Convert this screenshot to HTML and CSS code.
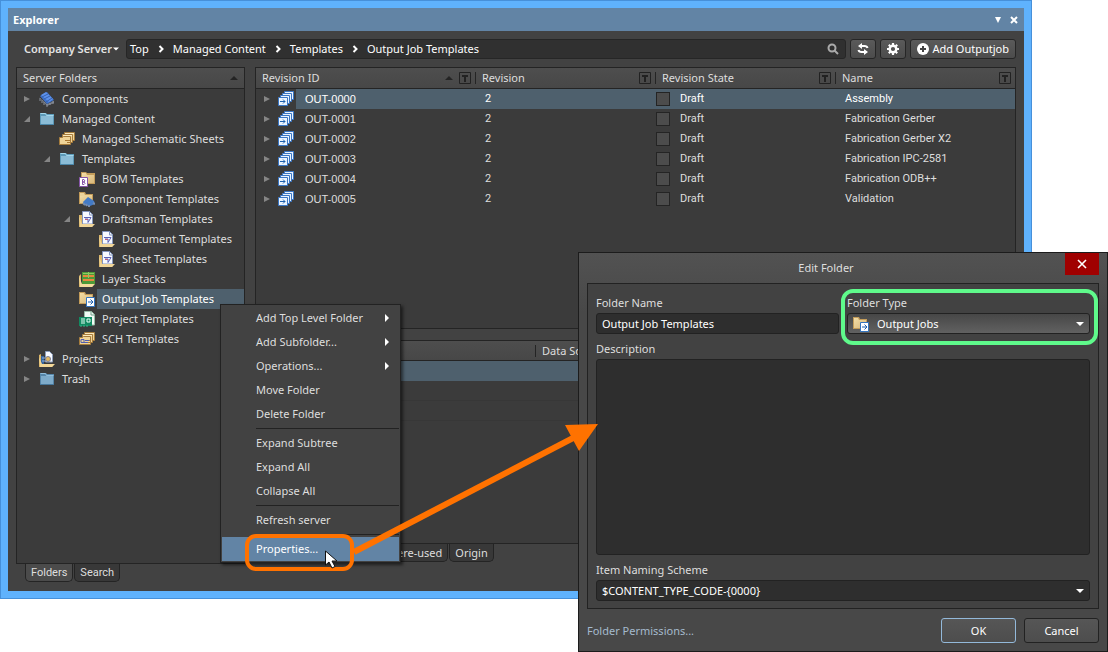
FILE: index.html
```html
<!DOCTYPE html>
<html lang="en">
<head>
<meta charset="utf-8">
<title>Explorer</title>
<link rel="stylesheet" href="styles.css">
</head>
<body>
<svg class="defs" aria-hidden="true">
  <defs>
    <linearGradient id="sand" x1="0" y1="0" x2="1" y2="1"><stop offset="0" stop-color="#f3dda6"/><stop offset="1" stop-color="#d9b97c"/></linearGradient>
  </defs>
  <symbol id="right" viewBox="0 0 8 8"><path d="M1 1l6 3-6 3z" fill="#858585"/></symbol>
  <symbol id="open" viewBox="0 0 8 8"><path d="M7 1v6H1z" fill="#858585"/></symbol>
  <symbol id="folder-blue" viewBox="0 0 16 16"><path d="M1 2h6l1 1h7v11H1z" fill="#5d9ab8"/><path d="M1.500 2.500h5l1 2h7" fill="none" stroke="#a5d7ea"/><path d="M2 5h12v8H2z" fill="#8bbcd6"/><path d="M1 13.500h14" stroke="#4b86a8"/></symbol>
  <symbol id="folder-trash" viewBox="0 0 16 16"><path d="M1 2h6l1 1h7v11H1z" fill="#5686a9"/><path d="M1.500 2.500h5l1 2h7" fill="none" stroke="#92bedb"/><path d="M2 5h12v8H2z" fill="#7eabca"/><path d="M1 13.500h14" stroke="#47779b"/></symbol>
  <symbol id="chip" viewBox="0 0 16 16"><path d="M0 6l8 9 7-3v-2l-7 3z" fill="#777c86"/><path d="M1 5l7-4 7 8-7 4z" fill="#3f73cc"/><path d="M2 4l5-3 7 7-4 3z" fill="#5e92ea"/><path d="M3 6l6-3M5 8l6-3M7 11l6-4" stroke="#3560b0"/><path d="M1 7v3M3 9v3M5 11v3M8 13v3M11 12v2M14 10v3" stroke="#8d929c"/></symbol>
  <symbol id="sand-folder" viewBox="0 0 16 16"><path d="M0 1h6l1 2h7v10H0z" fill="#c39c5a"/><path d="M1 2h4l1 2h7v8H1z" fill="#edd49b"/><path d="M1 5h12v7H1z" fill="url(#sand)"/></symbol>
  <symbol id="stack" viewBox="0 0 16 16"><g stroke="#a67c3c" fill="#efd498"><path d="M5.500 1.500h10v8h-10z"/><path d="M3.500 3.500h10v8h-10z"/><path d="M.5 6.500h3l1-1h7v8H.5z"/></g><path d="M6 2.500h9M4 4.500h9" stroke="#fbe9bc"/><path d="M6 9.500h5M8 11.500h3" stroke="#a97832"/></symbol>
  <symbol id="bom" viewBox="0 0 16 16"><path d="M2 1h5l1 1h8v11H2z" fill="#c39c5a"/><path d="M3 2h4l1 2h7v8H3z" fill="url(#sand)"/><path d="M.5 6.500h8v9h-8z" fill="#fff" stroke="#8755a8"/><path d="M3.500 8.500H5q1.500 1.500 0 2.500H3.500zm0 2.500H5q2 1.500 0 2.500H3.500z" fill="none" stroke="#8755a8"/></symbol>
  <symbol id="comp" viewBox="0 0 16 16"><use href="#sand-folder"/><path d="M4 11l5-5 6 4 1 3-5 2-6-1z" fill="#437bc7"/><path d="M4 12l2 2M7 13l1 2M10 14v2M14 12l2 1" stroke="#758caf" stroke-width="2"/></symbol>
  <symbol id="draft" viewBox="0 0 16 16"><path d="M0 4h3v9h12l-2 3H0z" fill="#d9b467"/><path d="M3.500.5h7l3 3V13h-10z" fill="#f7f9ff" stroke="#8294bd"/><path d="M10.500.5V4h3" fill="none" stroke="#8294bd"/><path d="M5 6.500h7l-3 5V8H6" stroke="#5b60b4" fill="none"/><path d="M6 8.500h3" stroke="#bd5e72"/><path d="M0 5l3 8h13l-3 3H1z" fill="#f0d598"/></symbol>
  <symbol id="layers" viewBox="0 0 16 16"><path d="M0 5l2-2v10h13l-2 3H0z" fill="#d9b467"/><path d="M3 1h13v12H3z" fill="#4d9a38"/><path d="M4 4h11v2H4zM4 8h11v2H4z" fill="#e8873d"/><path d="M4 2.500h11M9.500 1v6" stroke="#8cc864"/><path d="M0 5l3 8h13l-3 3H1z" fill="#f4dc9e"/></symbol>
  <symbol id="job" viewBox="0 0 16 16"><path d="M0 1h6l1 2h7v10H0z" fill="#c39c5a"/><path d="M1 2h4l1 2h7v8H1z" fill="url(#sand)"/><path d="M7.500 6.500h8v9h-8z" fill="#fff" stroke="#3374be"/><path d="M9 11h5M11.500 8.500L14 11l-2.500 2.500" fill="none" stroke="#1c5fae"/></symbol>
  <symbol id="project" viewBox="0 0 16 16"><path d="M5.500.5h7l3 3V14h-10z" fill="#f1fbf5" stroke="#9abda9"/><path d="M12 .5V4h4" fill="none" stroke="#74a18b"/><path d="M0 6h13v9H0z" fill="#128a61"/><path d="M2 8h4M2 10h4M2 12h4M8 8h3v3H8z" stroke="#e4fff4" fill="none"/><path d="M2 14v2M5 14v2M8 14v2" stroke="#37bd8d"/></symbol>
  <symbol id="sch" viewBox="0 0 16 16"><use href="#stack"/><path d="M2 8.500h3v3H2zM6 9.500h4M5 11.500h4" fill="none" stroke="#515fb0"/></symbol>
  <symbol id="projects" viewBox="0 0 16 16"><path d="M0 4l2-1v10h13l-2 3H0z" fill="#d9b467"/><path d="M6.500.5h4l3 3V11h-7z" fill="#f7f9ff" stroke="#8b9dba"/><path d="M2 5h3v8H2z" fill="#36649d"/><circle cx="9" cy="8" r="2.500" fill="#e0b75f" stroke="#7b7f95"/><path d="M3 7h3M3 10h3" stroke="#8fb4e2"/><path d="M0 6l3 7h13l-3 3H1z" fill="#f3d898"/></symbol>
  <symbol id="rev" viewBox="0 0 16 16"><g fill="#eaf4ff" stroke="#3a76c4"><path d="M6.500.5h9v8h-9z"/><path d="M4.500 2.500h9v8h-9z"/><path d="M2.500 4.500h9v8h-9z"/><path d="M.5 6.500h9v8h-9z"/></g><path d="M2 10.500h5M5 8.500l2 2-2 2" fill="none" stroke="#1c5fae"/></symbol>
  <symbol id="filter" viewBox="0 0 12 12"><path d="M.5.5h11v11H.5z" fill="none" stroke="#222"/><path d="M3 4h6M6 3v7" stroke="#222" stroke-width="2"/></symbol>
  <symbol id="up" viewBox="0 0 8 8"><path d="M0 6l4-4 4 4z" fill="#242424"/></symbol>
  <symbol id="down" viewBox="0 0 8 8"><path d="M0 2h8L4 6z" fill="#fff"/></symbol>
  <symbol id="sub" viewBox="0 0 8 8"><path d="M2 0l4 4-4 4z" fill="#fff"/></symbol>
  <symbol id="chev" viewBox="0 0 8 8"><path d="M2.500 1l3 3-3 3" fill="none" stroke="#fff" stroke-width="2"/></symbol>
</svg>

<main class="scene">
  <section class="explorer" aria-label="Explorer">
    <header class="titlebar">
      <h1>Explorer</h1>
      <button class="plain" aria-label="Panel menu"><svg class="i8" viewBox="0 0 8 8"><path d="M1 1h6L4 7z" fill="#fff"/></svg></button>
      <button class="plain" aria-label="Close panel"><svg class="i8" viewBox="0 0 8 8"><path d="M1 1l6 6M7 1L1 7" stroke="#fff" stroke-width="2"/></svg></button>
    </header>
    <div class="content">
      <div class="toolbar">
        <button class="plain server">Company Server <svg class="i6"><use href="#down"/></svg></button>
        <nav class="crumbs" aria-label="Path">
          <button class="plain">Top</button><svg class="i8"><use href="#chev"/></svg>
          <button class="plain">Managed Content</button><svg class="i8"><use href="#chev"/></svg>
          <button class="plain">Templates</button><svg class="i8"><use href="#chev"/></svg>
          <button class="plain">Output Job Templates</button>
          <button class="plain search" aria-label="Search"><svg class="i12" viewBox="0 0 12 12"><circle cx="5" cy="5" r="3.500" fill="none" stroke="#aaa" stroke-width="2"/><path d="M7.500 7.500l3.500 3.500" stroke="#aaa" stroke-width="2"/></svg></button>
        </nav>
        <button class="tool" aria-label="Refresh"><svg class="i12" viewBox="0 0 12 12"><path d="M4 3h3.500Q10 3 10.500 5M8 9H4.500Q2 9 1.500 7" fill="none" stroke="#fff" stroke-width="2"/><path d="M5 0v6L1 3zM7 6v6l4-3z" fill="#fff"/></svg></button>
        <button class="tool" aria-label="Settings"><svg class="i12" viewBox="0 0 12 12"><circle cx="6" cy="6" r="3.300" fill="none" stroke="#fff" stroke-width="2.400"/><path d="M6 0v2M6 10v2M0 6h2M10 6h2M1.800 1.800l1.400 1.400M8.800 8.800l1.400 1.400M1.800 10.200l1.400-1.400M8.800 3.200l1.400-1.400" stroke="#fff" stroke-width="2.200"/></svg></button>
        <button class="tool"><svg class="i12" viewBox="0 0 12 12"><circle cx="6" cy="6" r="6" fill="#fff"/><path d="M6 3v6M3 6h6" stroke="#444" stroke-width="2"/></svg>Add Outputjob</button>
      </div>

      <div class="panels">
        <section class="left">
          <div class="box grow">
            <h2 class="head">Server Folders<svg class="i8"><use href="#up"/></svg></h2>
            <ul class="tree">
              <li><svg class="i8"><use href="#right"/></svg><svg class="i16"><use href="#chip"/></svg><span>Components</span></li>
              <li><svg class="i8"><use href="#open"/></svg><svg class="i16"><use href="#folder-blue"/></svg><span>Managed Content</span></li>
              <li class="l1"><i></i><svg class="i16"><use href="#stack"/></svg><span>Managed Schematic Sheets</span></li>
              <li class="l1"><svg class="i8"><use href="#open"/></svg><svg class="i16"><use href="#folder-blue"/></svg><span>Templates</span></li>
              <li class="l2"><i></i><svg class="i16"><use href="#bom"/></svg><span>BOM Templates</span></li>
              <li class="l2"><i></i><svg class="i16"><use href="#comp"/></svg><span>Component Templates</span></li>
              <li class="l2"><svg class="i8"><use href="#open"/></svg><svg class="i16"><use href="#draft"/></svg><span>Draftsman Templates</span></li>
              <li class="l3"><i></i><svg class="i16"><use href="#draft"/></svg><span>Document Templates</span></li>
              <li class="l3"><i></i><svg class="i16"><use href="#draft"/></svg><span>Sheet Templates</span></li>
              <li class="l2"><i></i><svg class="i16"><use href="#layers"/></svg><span>Layer Stacks</span></li>
              <li class="l2 chosen"><i></i><svg class="i16"><use href="#job"/></svg><span>Output Job Templates</span></li>
              <li class="l2"><i></i><svg class="i16"><use href="#project"/></svg><span>Project Templates</span></li>
              <li class="l2"><i></i><svg class="i16"><use href="#sch"/></svg><span>SCH Templates</span></li>
              <li><svg class="i8"><use href="#right"/></svg><svg class="i16"><use href="#projects"/></svg><span>Projects</span></li>
              <li><svg class="i8"><use href="#right"/></svg><svg class="i16"><use href="#folder-trash"/></svg><span>Trash</span></li>
            </ul>
          </div>
          <div class="tabs"><button class="tab on">Folders</button><button class="tab">Search</button></div>
        </section>

        <section class="right">
          <div class="box upper">
            <table class="grid">
              <colgroup><col class="c-id"><col class="c-mid"><col class="c-mid"><col></colgroup>
              <thead><tr>
                <th><div class="th">Revision ID<svg class="i8"><use href="#up"/></svg><svg class="i12"><use href="#filter"/></svg></div></th>
                <th><div class="th">Revision<svg class="i12"><use href="#filter"/></svg></div></th>
                <th><div class="th">Revision State<svg class="i12"><use href="#filter"/></svg></div></th>
                <th><div class="th">Name<svg class="i12"><use href="#filter"/></svg></div></th>
              </tr></thead>
              <tbody>
                <tr class="chosen"><td><div class="id"><svg class="i8"><use href="#right"/></svg><svg class="i16"><use href="#rev"/></svg><span>OUT-0000</span></div></td><td>2</td><td><label><input type="checkbox">Draft</label></td><td>Assembly</td></tr>
                <tr><td><div class="id"><svg class="i8"><use href="#right"/></svg><svg class="i16"><use href="#rev"/></svg><span>OUT-0001</span></div></td><td>2</td><td><label><input type="checkbox">Draft</label></td><td>Fabrication Gerber</td></tr>
                <tr><td><div class="id"><svg class="i8"><use href="#right"/></svg><svg class="i16"><use href="#rev"/></svg><span>OUT-0002</span></div></td><td>2</td><td><label><input type="checkbox">Draft</label></td><td>Fabrication Gerber X2</td></tr>
                <tr><td><div class="id"><svg class="i8"><use href="#right"/></svg><svg class="i16"><use href="#rev"/></svg><span>OUT-0003</span></div></td><td>2</td><td><label><input type="checkbox">Draft</label></td><td>Fabrication IPC-2581</td></tr>
                <tr><td><div class="id"><svg class="i8"><use href="#right"/></svg><svg class="i16"><use href="#rev"/></svg><span>OUT-0004</span></div></td><td>2</td><td><label><input type="checkbox">Draft</label></td><td>Fabrication ODB++</td></tr>
                <tr><td><div class="id"><svg class="i8"><use href="#right"/></svg><svg class="i16"><use href="#rev"/></svg><span>OUT-0005</span></div></td><td>2</td><td><label><input type="checkbox">Draft</label></td><td>Validation</td></tr>
              </tbody>
            </table>
          </div>
          <div class="box grow">
            <div class="head lower"><i></i><span>Data Source</span></div>
            <div class="stripe chosen"></div><div class="stripe line"></div><div class="stripe line"></div>
          </div>
          <div class="tabs detail"><button class="tab">Where-used</button><button class="tab">Origin</button></div>
        </section>
      </div>
    </div>
  </section>

  <div class="menu" role="menu">
    <button role="menuitem">Add Top Level Folder<svg class="i8"><use href="#sub"/></svg></button>
    <button role="menuitem">Add Subfolder...<svg class="i8"><use href="#sub"/></svg></button>
    <button role="menuitem">Operations...<svg class="i8"><use href="#sub"/></svg></button>
    <button role="menuitem">Move Folder</button>
    <button role="menuitem">Delete Folder</button>
    <hr>
    <button role="menuitem">Expand Subtree</button>
    <button role="menuitem">Expand All</button>
    <button role="menuitem">Collapse All</button>
    <hr>
    <button role="menuitem">Refresh server</button>
    <hr>
    <button role="menuitem" class="hot">Properties...</button>
  </div>

  <form class="dialog" role="dialog" aria-labelledby="dlg-title">
    <header class="dlg-head">
      <h2 id="dlg-title">Edit Folder</h2>
      <button type="button" class="close" aria-label="Close"><svg class="i12" viewBox="0 0 12 12"><path d="M2 2l8 8M10 2l-8 8" stroke="#fff" stroke-width="1.600"/></svg></button>
    </header>
    <div class="fields">
      <div class="pair">
        <div class="field"><label for="fname">Folder Name</label><input id="fname" type="text" value="Output Job Templates"></div>
        <div class="field"><label for="ftype">Folder Type</label>
          <div class="pick"><select id="ftype" class="raised"><option>Output Jobs</option></select><svg class="i16 pick-icon"><use href="#job"/></svg><svg class="i8 caret"><use href="#down"/></svg></div>
        </div>
      </div>
      <div class="field tall"><label for="desc">Description</label><textarea id="desc"></textarea></div>
      <div class="field"><label for="scheme">Item Naming Scheme</label>
        <div class="pick"><select id="scheme"><option>$CONTENT_TYPE_CODE-{0000}</option></select><svg class="i8 caret"><use href="#down"/></svg></div>
      </div>
    </div>
    <footer class="dlg-foot">
      <a href="#permissions">Folder Permissions...</a>
      <button type="button" class="btn primary">OK</button>
      <button type="button" class="btn">Cancel</button>
    </footer>
  </form>

  <svg class="marks" viewBox="0 0 1108 652" aria-hidden="true">
    <rect x="843" y="291" width="253" height="52" rx="10" fill="none" stroke="#5ffa8b" stroke-width="4"/>
    <rect x="247" y="536" width="105" height="33" rx="9" fill="none" stroke="#ff7200" stroke-width="4"/>
    <path d="M354 552L575 437" stroke="#ff7200" stroke-width="6"/>
    <path d="M565 425l33-1-19 27z" fill="#ff7200"/>
    <path d="M325.500 551v14l3.500-3 3 6 3-1.500-3-5.500h5z" fill="#fff" stroke="#111"/>
  </svg>
</main>
</body>
</html>
```
FILE: styles.css
```css
* { box-sizing: border-box; }
body {
  margin: 0;
  background: #fff;
  color: #dedede;
  font: 11px/16px "Noto Sans", "Open Sans", sans-serif;
}
h1, h2, ul { margin: 0; padding: 0; font-size: inherit; font-weight: normal; list-style: none; }
button, input, select, textarea { font: inherit; color: inherit; margin: 0; }
svg { flex: none; display: block; }
.defs { position: absolute; width: 0; height: 0; }
.i6 { width: 6px; height: 6px; }
.i8 { width: 8px; height: 8px; }
.i12 { width: 12px; height: 12px; }
.i16 { width: 16px; height: 16px; }

.scene { position: relative; min-height: 100vh; padding: 0 76px 53px 0; display: flex; overflow: hidden; }
.plain { background: none; border: 0; padding: 0; display: flex; align-items: center; white-space: nowrap; }

.explorer {
  flex: 1;
  min-width: 0;
  display: flex;
  flex-direction: column;
  border: 1px solid #4690da;
  outline: 7px solid #5fb2fd;
  outline-offset: -8px;
  padding: 7px;
  background: #424242;
}
.titlebar { display: flex; align-items: center; gap: 8px; height: 23px; padding: 0 6px 0 5px; background: #6284a5; }
.titlebar h1 { flex: 1; font-weight: bold; color: #fff; }
.content { flex: 1; display: flex; flex-direction: column; gap: 8px; padding: 8px 8px 9px; }

.toolbar { display: flex; align-items: center; gap: 4px; height: 20px; color: #fff; }
.server { flex: none; width: 106px; padding-left: 8px; gap: 1px; font-weight: 600; color: #e4e4e4; }
.crumbs { flex: 1; display: flex; align-items: center; gap: 8px; height: 20px; padding: 0 6px 0 3px; background: #303030; border: 1px solid #262626; border-radius: 3px; }
.search { margin-left: auto; }
.tool { display: flex; align-items: center; gap: 3px; height: 20px; padding: 0 6px; background: linear-gradient(#5a5a5a, #4c4c4c); border: 1px solid #262626; border-radius: 3px; white-space: nowrap; }

.panels { flex: 1; display: grid; grid-template-columns: 229px 1fr; gap: 10px; }
.left, .right { display: flex; flex-direction: column; min-width: 0; }
.right { padding-bottom: 20px; }
.box { background: #3b3b3b; border: 1px solid #242424; }
.grow { flex: 1; }
.head { display: flex; align-items: center; justify-content: space-between; height: 21px; padding: 0 6px; background: linear-gradient(#4e4e4e, #474747); border-bottom: 1px solid #242424; }

.tree li { display: flex; align-items: center; height: 20px; padding-left: 6px; white-space: nowrap; }
.tree li > :first-child { flex: none; width: 8px; margin-right: 8px; }
.tree .l1 { padding-left: 26px; }
.tree .l2 { padding-left: 46px; }
.tree .l3 { padding-left: 66px; }
.tree span { flex: 1; line-height: 20px; margin-left: 2px; padding-left: 5px; }
.chosen > span, .stripe.chosen, .grid .chosen { background: #4e606d; color: #fff; }

.tabs { display: flex; gap: 1px; height: 18px; padding-left: 9px; }
.tab { height: 18px; padding: 0 5px; background: #383838; border: 1px solid #242424; border-top: 0; border-radius: 0 0 5px 5px; line-height: 18px; }
.tab.on { background: #4b4b4b; }
.left .tab { font-family: Roboto, "Liberation Sans", sans-serif; }

.upper { height: 262px; margin-bottom: 11px; }
.grid { width: 100%; border-collapse: separate; border-spacing: 0; table-layout: fixed; text-align: left; }
.c-id { width: 220px; }
.c-mid { width: 180px; }
.grid th { height: 21px; padding: 0; font-weight: normal; background: linear-gradient(#4e4e4e, #474747); border-bottom: 1px solid #242424; }
.th { display: flex; align-items: center; justify-content: flex-end; gap: 6px; height: 12px; padding: 0 4px 0 6px; border-right: 1px solid #242424; white-space: nowrap; }
.th svg:first-of-type { margin-left: auto; }
.grid th:last-child .th { border-right: 0; }
.grid td { height: 20px; padding: 0 0 0 9px; font-family: Roboto, "Liberation Sans", sans-serif; }
.grid td:first-child { padding: 0; }
.id { display: flex; align-items: center; padding-left: 7px; background: #3b3b3b; font-family: "Liberation Sans", Arial, sans-serif; }
.id .i16 { margin: 0 2px 0 7px; }
.id span { flex: 1; padding-left: 9px; line-height: 20px; }
.chosen .id span { background: #4e606d; }
.grid label { display: flex; align-items: center; gap: 10px; margin-left: -9px; }
.grid input { appearance: none; width: 14px; height: 14px; background: #4c4c4c; border: 1px solid #242424; }
.lower { justify-content: flex-start; gap: 6px; height: 20px; padding-left: 279px; white-space: nowrap; }
.lower i { width: 1px; height: 12px; background: #242424; }
.stripe { height: 20px; }
.line { border-bottom: 1px solid #373737; }
.detail { padding-left: 119px; }

.menu { position: absolute; left: 220px; top: 304px; width: 181px; padding: 1px; background: #424242; border: 1px solid #222; box-shadow: 2px 2px 3px #0008; }
.menu button { display: flex; align-items: center; justify-content: space-between; width: 100%; height: 24px; padding: 0 8px 0 34px; background: none; border: 0; text-align: left; }
.menu .hot { background: #6284a5; color: #fff; }
.menu hr { height: 1px; margin: 2px 0 2px 34px; border: 0; background: #222; }

.dialog { position: absolute; left: 578px; top: 252px; right: 0; bottom: 0; display: flex; flex-direction: column; padding: 0 8px 8px; background: linear-gradient(#525252, #484848 60px); border: 1px solid #1c1c1c; }
.dlg-head { display: grid; grid-template-columns: 34px 1fr 34px; height: 30px; }
.dlg-head h2 { grid-column: 2; text-align: center; line-height: 30px; margin-right: 34px; }
.close { grid-column: 3; display: grid; place-items: center; height: 22px; padding: 0; background: #a00000; border: 0; }
.fields { flex: 1; display: flex; flex-direction: column; gap: 7px; padding: 11px 8px 7px; background: #424242; border: 1px solid #222; }
.pair { display: grid; grid-template-columns: 1fr 1fr; gap: 8px; }
.field { display: flex; flex-direction: column; gap: 2px; min-width: 0; }
.tall { flex: 1; }
.tall textarea { flex: 1; resize: none; }
.field input, .field select, .field textarea { display: block; width: 100%; padding: 0 5px; background: #2e2e2e; border: 1px solid #222; border-radius: 3px; color: #fff; outline: 0; }
.field input, .field select { height: 21px; appearance: none; }
.pick { position: relative; }
.field .raised { padding-left: 29px; background: linear-gradient(#474747, #616161); }
.pick-icon { position: absolute; left: 6px; top: 3px; }
.caret { position: absolute; right: 6px; top: 7px; }
.dlg-foot { display: flex; align-items: center; gap: 8px; margin-top: 9px; }
.dlg-foot a { flex: 1; color: #a5bacd; text-decoration: none; }
.btn { width: 75px; height: 25px; background: linear-gradient(#565656, #4d4d4d); border: 1px solid #222; border-radius: 3px; color: #fff; }
.primary { border-color: #93b9da; }
.marks { position: absolute; left: 0; top: 0; width: 1108px; height: 652px; pointer-events: none; }
```
